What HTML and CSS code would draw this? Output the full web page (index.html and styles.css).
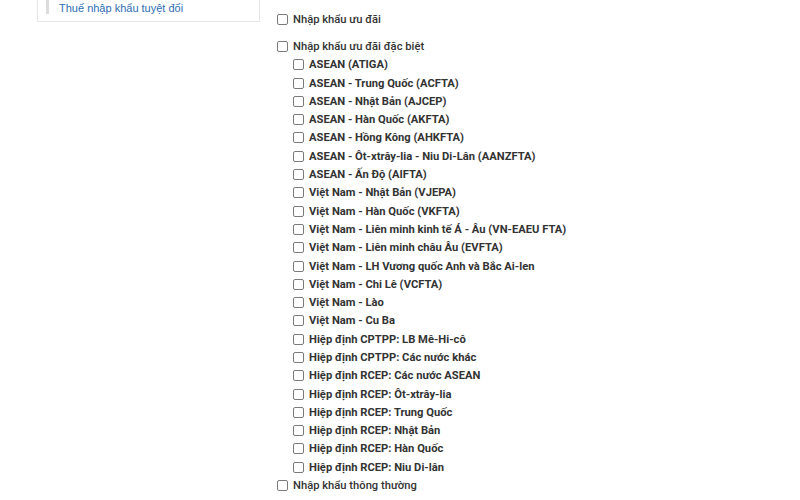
FILE: index.html
```html
<!DOCTYPE html>
<html lang="vi">

<head>
    <meta charset="UTF-8">
    <title>Loại thuế nhập khẩu</title>
    <link rel="stylesheet" href="styles.css">
</head>

<body>
<div class="page">
    <aside class="sidebar">
        <ul class="sidebar__list">
            <li class="sidebar__item"><a class="sidebar__link" href="#">Thuế nhập khẩu tuyệt đối</a></li>
        </ul>
    </aside>

    <main class="filters">
        <label class="check check--top check--first"><input type="checkbox"><span>Nhập khẩu ưu đãi</span></label>

        <label class="check check--top"><input type="checkbox"><span>Nhập khẩu ưu đãi đặc biệt</span></label>
        <div class="sublist">
            <label class="check"><input type="checkbox"><span>ASEAN (ATIGA)</span></label>
            <label class="check"><input type="checkbox"><span>ASEAN - Trung Quốc (ACFTA)</span></label>
            <label class="check"><input type="checkbox"><span>ASEAN - Nhật Bản (AJCEP)</span></label>
            <label class="check"><input type="checkbox"><span>ASEAN - Hàn Quốc (AKFTA)</span></label>
            <label class="check"><input type="checkbox"><span>ASEAN - Hồng Kông (AHKFTA)</span></label>
            <label class="check"><input type="checkbox"><span>ASEAN - Ôt-xtrây-lia - Niu Di-Lân (AANZFTA)</span></label>
            <label class="check"><input type="checkbox"><span>ASEAN - Ấn Độ (AIFTA)</span></label>
            <label class="check"><input type="checkbox"><span>Việt Nam - Nhật Bản (VJEPA)</span></label>
            <label class="check"><input type="checkbox"><span>Việt Nam - Hàn Quốc (VKFTA)</span></label>
            <label class="check"><input type="checkbox"><span>Việt Nam - Liên minh kinh tế Á - Âu (VN-EAEU FTA)</span></label>
            <label class="check"><input type="checkbox"><span>Việt Nam - Liên minh châu Âu (EVFTA)</span></label>
            <label class="check"><input type="checkbox"><span>Việt Nam - LH Vương quốc Anh và Bắc Ai-len</span></label>
            <label class="check"><input type="checkbox"><span>Việt Nam - Chi Lê (VCFTA)</span></label>
            <label class="check"><input type="checkbox"><span>Việt Nam - Lào</span></label>
            <label class="check"><input type="checkbox"><span>Việt Nam - Cu Ba</span></label>
            <label class="check"><input type="checkbox"><span>Hiệp định CPTPP: LB Mê-Hi-cô</span></label>
            <label class="check"><input type="checkbox"><span>Hiệp định CPTPP: Các nước khác</span></label>
            <label class="check"><input type="checkbox"><span>Hiệp định RCEP: Các nước ASEAN</span></label>
            <label class="check"><input type="checkbox"><span>Hiệp định RCEP: Ôt-xtrây-lia</span></label>
            <label class="check"><input type="checkbox"><span>Hiệp định RCEP: Trung Quốc</span></label>
            <label class="check"><input type="checkbox"><span>Hiệp định RCEP: Nhật Bản</span></label>
            <label class="check"><input type="checkbox"><span>Hiệp định RCEP: Hàn Quốc</span></label>
            <label class="check"><input type="checkbox"><span>Hiệp định RCEP: Niu Di-lân</span></label>
        </div>

        <label class="check check--top"><input type="checkbox"><span>Nhập khẩu thông thường</span></label>
    </main>
</div>
</body>

</html>
```

FILE: styles.css
```css
body {
  margin: 0;
  padding: 0;
  background-color: #FFFFFF;
  font-family: Roboto, "Liberation Sans", Arial, sans-serif;
  color: #333333;
  overflow: hidden;
}

.page {
  display: flex;
  align-items: flex-start;
  padding-left: 37px;
}

.sidebar {
  width: 221px;
  flex-shrink: 0;
  margin-right: 17px;
  padding-bottom: 7px;
  border: 1px solid #E6E6E6;
  border-top: none;
}

.sidebar__list {
  list-style: none;
  margin: 0;
  padding: 0 0 0 8px;
}

.sidebar__item {
  height: 14px;
  padding-left: 10px;
  border-left: 3px solid #DCDCDC;
  line-height: 14px;
}

.sidebar__link {
  font-family: "Liberation Sans", Arial, sans-serif;
  font-size: 11px;
  color: #2D6DB5;
  text-decoration: none;
}

.filters {
  display: flex;
  flex-direction: column;
  padding-top: 10px;
}

.check {
  display: flex;
  align-items: center;
  height: 18.3px;
  font-size: 11.2px;
  font-weight: 700;
  white-space: nowrap;
}

.check--top {
  font-weight: 500;
}

.check--first {
  margin-bottom: 9px;
}

.check input {
  appearance: none;
  -webkit-appearance: none;
  width: 11px;
  height: 11px;
  margin: 0 5px 0 0;
  border: 1px solid #7A7A7A;
  border-radius: 2px;
  background: #FFFFFF;
  flex-shrink: 0;
}

.sublist {
  display: flex;
  flex-direction: column;
  padding-left: 16px;
}
```
